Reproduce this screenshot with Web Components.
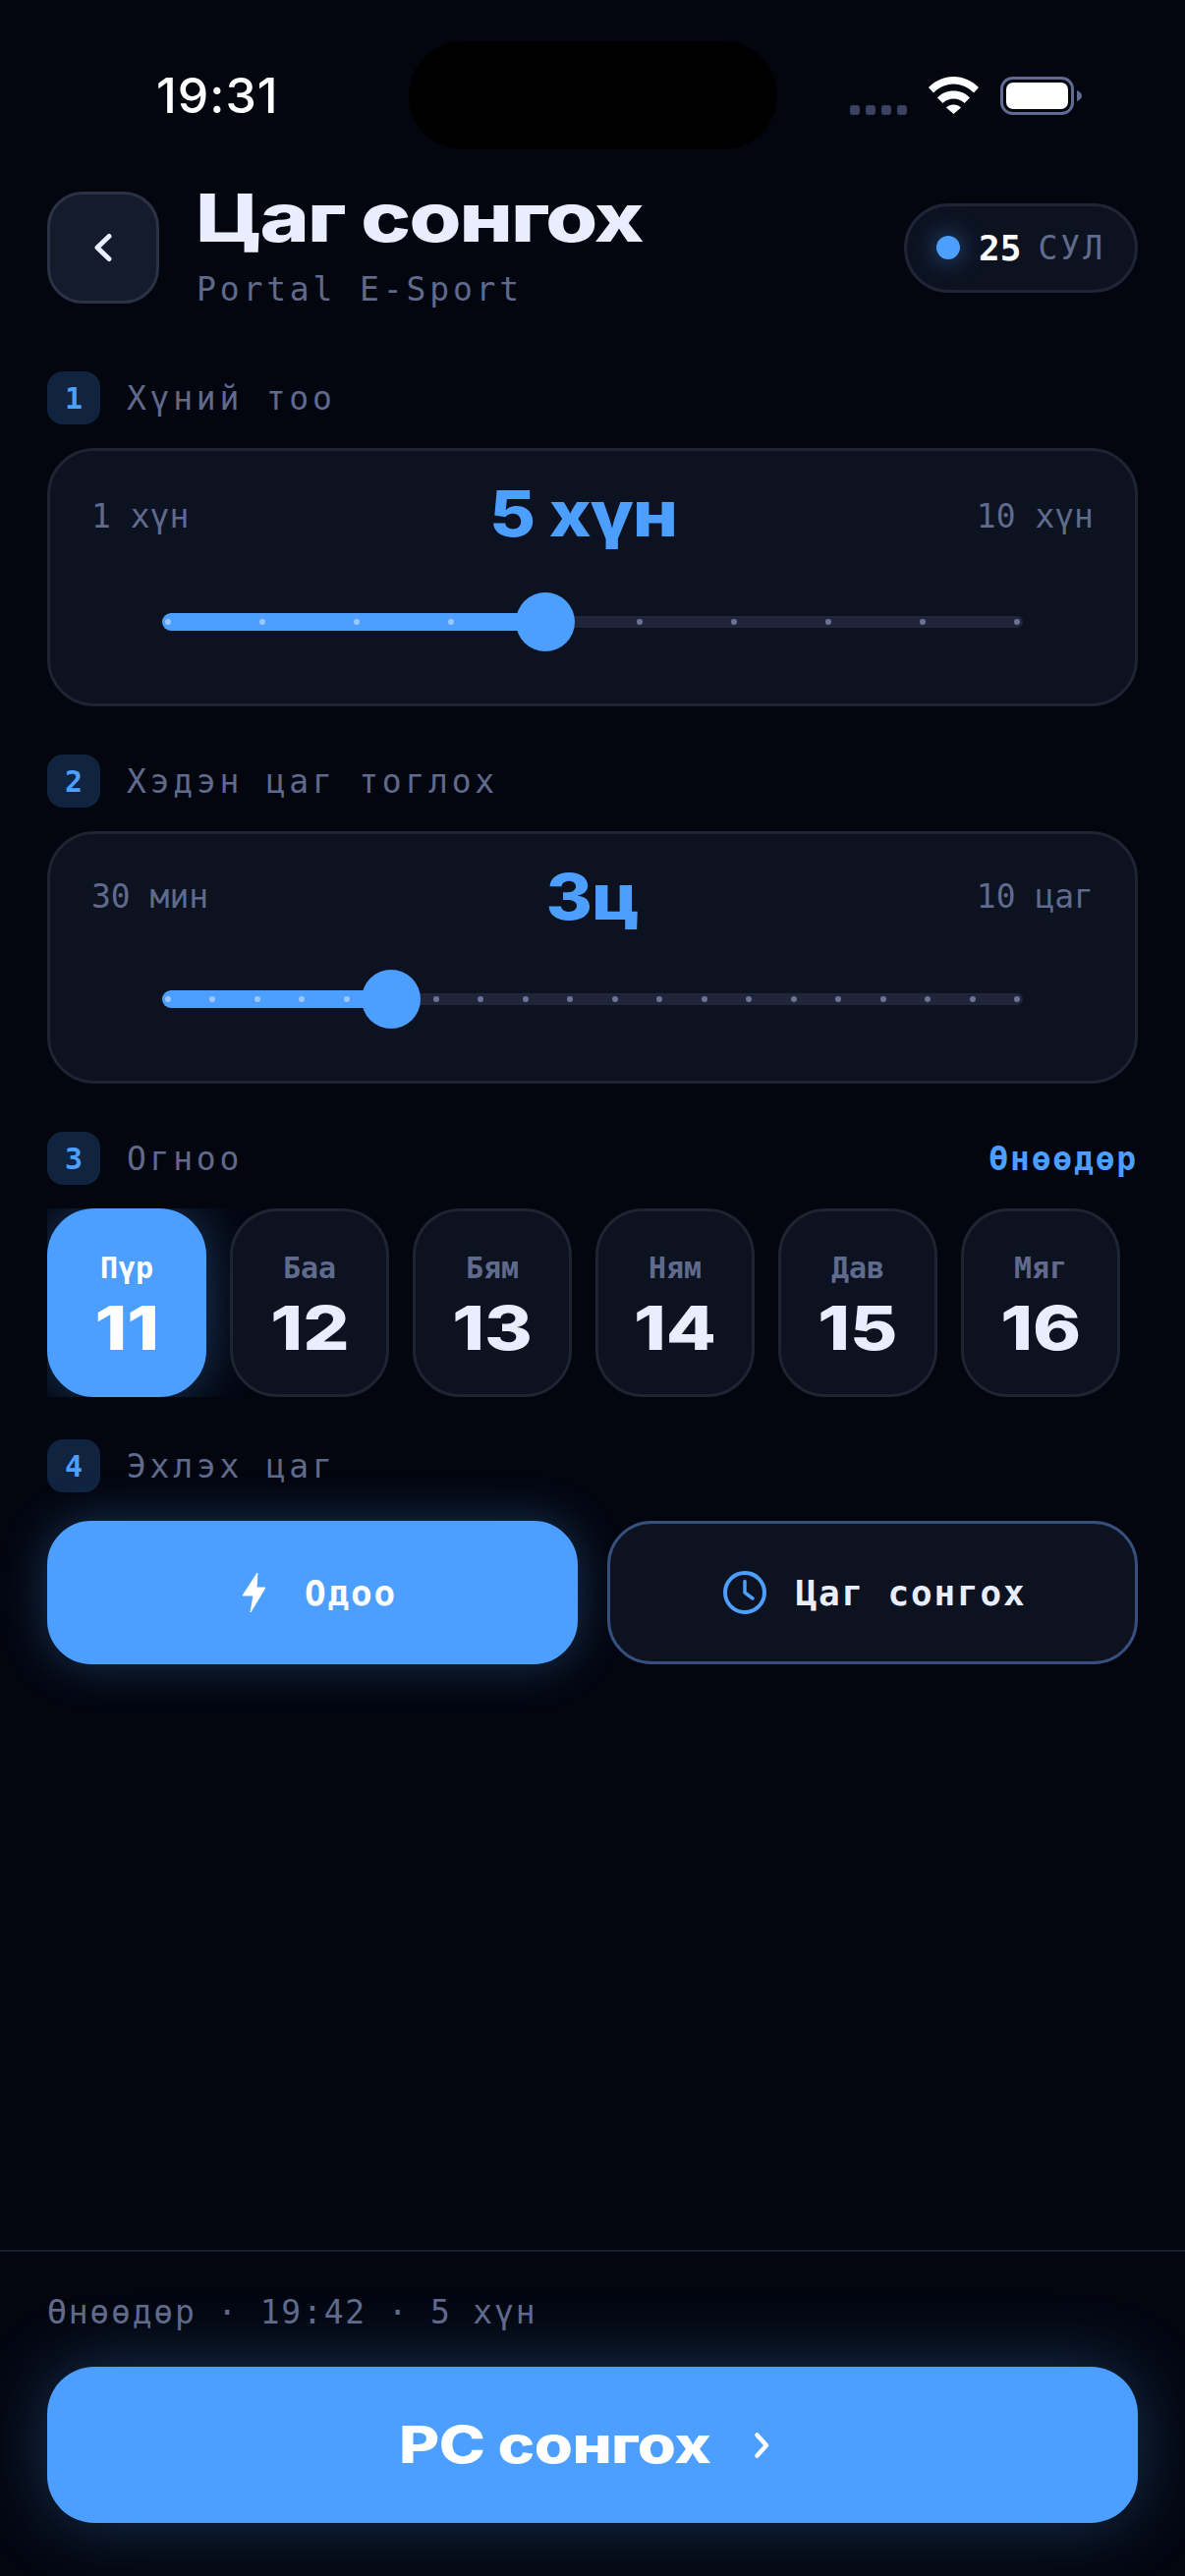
<!DOCTYPE html>
<html lang="mn">
<head>
<meta charset="utf-8">
<title>Цаг сонгох</title>
<style>
  html, body { margin: 0; background: #03060f; }
</style>
</head>
<body>
<app-screen></app-screen>
<script>
const MONO = '"DejaVu Sans Mono", "Liberation Mono", monospace';
const DISPLAY = 'Inter, "Noto Sans", sans-serif';

class StatusBar extends HTMLElement {
  connectedCallback() {
    this.attachShadow({ mode: 'open' }).innerHTML = `
      <style>
        :host { display: grid; grid-template-columns: 1fr 375px 1fr; align-items: center; padding-top: 42px; }
        .time { padding-left: 159px; font: 500 50px Inter, "Liberation Sans", sans-serif; color: #fff; letter-spacing: 1px; }
        .island { height: 110px; border-radius: 55px; background: #000; }
        .right { display: flex; justify-content: flex-end; align-items: center; gap: 22px; padding-right: 105px; }
        .dots { display: flex; gap: 6px; align-self: flex-end; }
        .dots i { width: 10px; height: 10px; border-radius: 3px; background: #3a4260; }
        svg { display: block; }
      </style>
      <div class="time">19:31</div>
      <div class="island"></div>
      <div class="right">
        <div class="dots"><i></i><i></i><i></i><i></i></div>
        <svg width="51" height="38" viewBox="0 0 51 38">
          <path fill="#fff" d="M25.5 0C15.5 0 7 4 0 11l5 5.5C10.500 11 17.500 7.500 25.500 7.500S40.500 11 46 16.500L51 11C44 4 35.500 0 25.500 0Z"/>
          <path fill="#fff" d="M25.500 14.500C19 14.500 13 17 9 21.500l5.500 5.500C17.500 24 21 22.500 25.500 22.500S33.500 24 36.500 27L42 21.500C38 17 32 14.500 25.500 14.500Z"/>
          <path fill="#fff" d="M25.500 28.500C22.500 28.500 20 29.500 18 31.500L25.500 38 33 31.500C31 29.500 28.500 28.500 25.500 28.500Z"/>
        </svg>
        <svg width="83" height="39" viewBox="0 0 83 39">
          <rect x="1.500" y="1.500" width="72" height="36" rx="11" fill="none" stroke="#5f6b90" stroke-width="3"/>
          <rect x="6" y="6" width="63" height="27" rx="7" fill="#fff"/>
          <path d="M78 14c3 1 5 3 5 5.500S81 24 78 25Z" fill="#5f6b90"/>
        </svg>
      </div>`;
  }
}

class PageHeader extends HTMLElement {
  connectedCallback() {
    this.attachShadow({ mode: 'open' }).innerHTML = `
      <style>
        :host { display: flex; align-items: center; gap: 37px; padding: 0 48px; }
        .back { width: 114px; height: 114px; box-sizing: border-box; flex: none; display: flex; align-items: center; justify-content: center; border: 3px solid #2b3245; border-radius: 36px; background: #141c2b; }
        .titles { flex: 1; display: flex; flex-direction: column; }
        h1 { margin: 0; font: 800 68px/62px ${DISPLAY}; color: #e8edff; letter-spacing: -1.500px; transform: scaleX(1.26); transform-origin: left center; white-space: nowrap; }
        p { margin: 24px 0 0 1px; font: 400 33px/38px ${MONO}; color: #5f6a8c; letter-spacing: 3.850px; }
        .pill { height: 91px; box-sizing: border-box; display: flex; align-items: center; padding: 0 30px; border: 3px solid #1f2536; border-radius: 46px; background: #0c1220; }
        .dot { width: 24px; height: 24px; border-radius: 50%; background: #4c9eff; box-shadow: 0 0 24px rgba(76,158,255,.55); margin-right: 19px; }
        b { font: 700 36px ${MONO}; color: #fff; margin-right: 17px; }
        span { font: 400 33px ${MONO}; color: #5f6a8c; letter-spacing: 3px; }
      </style>
      <div class="back">
        <svg width="30" height="42" viewBox="0 0 30 42"><path d="M21 9.500 9 21l12 11.500" fill="none" stroke="#e8edff" stroke-width="5" stroke-linecap="round" stroke-linejoin="round"/></svg>
      </div>
      <div class="titles"><h1>Цаг сонгох</h1><p>Portal E-Sport</p></div>
      <div class="pill"><div class="dot"></div><b>25</b><span>СУЛ</span></div>`;
  }
}

class StepLabel extends HTMLElement {
  connectedCallback() {
    this.attachShadow({ mode: 'open' }).innerHTML = `
      <style>
        :host { display: flex; align-items: center; gap: 27px; padding: 0 48px; height: 54px; }
        .num { width: 54px; height: 54px; border-radius: 16px; background: #10233f; color: #4c9eff; display: flex; align-items: center; justify-content: center; font: 700 30px ${MONO}; }
        .text { flex: 1; font: 400 33px ${MONO}; color: #5f6a8c; letter-spacing: 3.750px; }
        ::slotted(*) { font: 700 33px ${MONO}; color: #4c9eff; letter-spacing: 1.800px; }
      </style>
      <div class="num">${this.getAttribute('num')}</div>
      <div class="text">${this.getAttribute('text')}</div>
      <slot></slot>`;
  }
}

class RangeCard extends HTMLElement {
  connectedCallback() {
    const count = Number(this.getAttribute('dots'));
    const at = Number(this.getAttribute('at'));
    const offset = Number(this.getAttribute('offset') || 0);
    const dots = [];
    for (let i = 0; i < count; i++) dots.push(`<i class="${i <= at ? 'on' : ''}"></i>`);
    const thumb = at / (count - 1) * 864 + 5.5;
    this.attachShadow({ mode: 'open' }).innerHTML = `
      <style>
        :host { display: block; margin: 24px 48px 0; box-sizing: border-box; border: 3px solid #1f2433; border-radius: 48px; background: #0c1220; padding: 0 42px 53px; }
        .row { display: flex; justify-content: space-between; align-items: flex-start; height: ${138 + offset}px; }
        .side { margin-top: ${44 + offset / 2}px; font: 400 33px/40px ${MONO}; color: #5f6a8c; }
        .value { margin-top: 26px; font: 800 64px/76px ${DISPLAY}; color: #4c9eff; transform: scaleX(1.13); letter-spacing: -1px; }
        .slider { position: relative; height: 60px; margin: 0 72px; display: flex; align-items: center; }
        .track { position: relative; flex: 1; height: 12px; border-radius: 6px; background: #20253a; display: flex; justify-content: space-between; align-items: center; padding: 0 2.500px; }
        .fill { position: absolute; left: 0; top: -3px; height: 18px; width: ${thumb}px; border-radius: 9px 0 0 9px; background: #4c9eff; }
        i { position: relative; width: 6px; height: 6px; border-radius: 50%; background: #6a7396; }
        i.on { background: #9cc8ff; }
        .thumb { position: absolute; top: 0; left: ${thumb - 30}px; width: 60px; height: 60px; border-radius: 50%; background: #4c9eff; }
      </style>
      <div class="row">
        <div class="side">${this.getAttribute('from')}</div>
        <div class="value">${this.getAttribute('value')}</div>
        <div class="side">${this.getAttribute('to')}</div>
      </div>
      <div class="slider">
        <div class="track"><div class="fill"></div>${dots.join('')}</div>
        <div class="thumb"></div>
      </div>`;
  }
}

class DateChip extends HTMLElement {
  connectedCallback() {
    const active = this.hasAttribute('active');
    this.attachShadow({ mode: 'open' }).innerHTML = `
      <style>
        :host { flex: none; width: 162px; height: 192px; box-sizing: border-box; display: flex; flex-direction: column; align-items: center; border-radius: 48px; position: relative;
          border: 3px solid ${active ? '#4c9eff' : '#1f2433'}; background: ${active ? '#4c9eff' : '#0c1220'};
          ${active ? 'box-shadow: 0 0 54px rgba(76,158,255,.35);' : ''} }
        .day { margin-top: 40px; font: 700 30px/36px ${MONO}; color: ${active ? '#fff' : '#5f6a8c'}; }
        .num { margin-top: 11px; font: 800 62px/64px ${DISPLAY}; color: ${active ? '#fff' : '#e8edff'}; transform: scaleX(1.2); }
      </style>
      <div class="day">${this.getAttribute('day')}</div>
      <div class="num">${this.getAttribute('num')}</div>`;
  }
}

class DateStrip extends HTMLElement {
  connectedCallback() {
    this.attachShadow({ mode: 'open' }).innerHTML = `
      <style>
        :host { display: flex; gap: 24px; margin: 24px 48px 0; overflow: hidden; }
      </style>
      <slot></slot>`;
  }
}

class StartButton extends HTMLElement {
  connectedCallback() {
    const primary = this.hasAttribute('primary');
    this.attachShadow({ mode: 'open' }).innerHTML = `
      <style>
        :host { flex: 1 1 0; height: 146px; box-sizing: border-box; display: flex; align-items: center; justify-content: center; gap: 30px; padding-left: 4px; border-radius: 45px;
          border: 3px solid ${primary ? '#4c9eff' : '#36507e'}; background: ${primary ? '#4c9eff' : '#0c1220'};
          ${primary ? 'box-shadow: 0 0 48px rgba(76,158,255,.3);' : ''}
          font: 700 36px ${MONO}; letter-spacing: 1.800px; color: ${primary ? '#fff' : '#e8edff'}; }
        ::slotted(svg) { display: block; flex: none; }
      </style>
      <slot name="icon"></slot><slot></slot>`;
  }
}

class BottomBar extends HTMLElement {
  connectedCallback() {
    this.attachShadow({ mode: 'open' }).innerHTML = `
      <style>
        :host { display: block; margin-top: auto; border-top: 2px solid #181e2c; padding: 42px 48px 54px; }
        p { margin: 0 0 35px; font: 400 33px/40px ${MONO}; color: #5f6a8c; letter-spacing: 1.800px; white-space: nowrap; }
        .cta { height: 159px; display: flex; align-items: center; justify-content: center; gap: 98px; border-radius: 48px; background: #4c9eff; box-shadow: 0 0 72px rgba(76,158,255,.3); }
        .cta span { font: 800 52px ${DISPLAY}; color: #fff; transform: scaleX(1.22); transform-origin: left center; letter-spacing: -.5px; }
        svg { display: block; }
      </style>
      <p>Өнөөдөр · 19:42 · 5 хүн</p>
      <div class="cta">
        <span>PC сонгох</span>
        <svg width="36" height="36" viewBox="0 0 36 36"><path d="M6.500 7.500 16 18 6.500 28.500" fill="none" stroke="#fff" stroke-width="4.500" stroke-linecap="round" stroke-linejoin="round"/></svg>
      </div>`;
  }
}

class AppScreen extends HTMLElement {
  connectedCallback() {
    this.attachShadow({ mode: 'open' }).innerHTML = `
      <style>
        :host { display: flex; flex-direction: column; width: 1206px; height: 2622px; overflow: hidden; background: #03060f; }
        page-header { margin-top: 38px; }
        .s1 { margin-top: 64px; }
        .s { margin-top: 49px; }
        .s4 { margin-top: 43px; }
        .actions { display: flex; gap: 30px; margin: 29px 48px 0; }
      </style>
      <status-bar></status-bar>
      <page-header></page-header>
      <step-label class="s1" num="1" text="Хүний тоо"></step-label>
      <range-card from="1 хүн" value="5 хүн" to="10 хүн" dots="10" at="4" offset="6"></range-card>
      <step-label class="s" num="2" text="Хэдэн цаг тоглох"></step-label>
      <range-card from="30 мин" value="3ц" to="10 цаг" dots="20" at="5"></range-card>
      <step-label class="s" num="3" text="Огноо"><span>Өнөөдөр</span></step-label>
      <date-strip>
        <date-chip active day="Пүр" num="11"></date-chip>
        <date-chip day="Баа" num="12"></date-chip>
        <date-chip day="Бям" num="13"></date-chip>
        <date-chip day="Ням" num="14"></date-chip>
        <date-chip day="Дав" num="15"></date-chip>
        <date-chip day="Мяг" num="16"></date-chip>
      </date-strip>
      <step-label class="s4" num="4" text="Эхлэх цаг"></step-label>
      <div class="actions">
        <start-button primary>
          <svg slot="icon" width="44" height="44" viewBox="0 0 44 44"><path d="M26 2 11 25H22L19 42 34 17H25Z" fill="#fff" stroke="#fff" stroke-width="1" stroke-linejoin="round"/></svg>
          Одоо
        </start-button>
        <start-button>
          <svg slot="icon" width="44" height="44" viewBox="0 0 44 44"><circle cx="22" cy="22" r="20" fill="none" stroke="#4c9eff" stroke-width="4"/><path d="M22 10.500V22l8 6" fill="none" stroke="#4c9eff" stroke-width="3.500" stroke-linecap="round" stroke-linejoin="round"/></svg>
          Цаг сонгох
        </start-button>
      </div>
      <bottom-bar></bottom-bar>`;
  }
}

customElements.define('status-bar', StatusBar);
customElements.define('page-header', PageHeader);
customElements.define('step-label', StepLabel);
customElements.define('range-card', RangeCard);
customElements.define('date-chip', DateChip);
customElements.define('date-strip', DateStrip);
customElements.define('start-button', StartButton);
customElements.define('bottom-bar', BottomBar);
customElements.define('app-screen', AppScreen);
</script>
</body>
</html>
